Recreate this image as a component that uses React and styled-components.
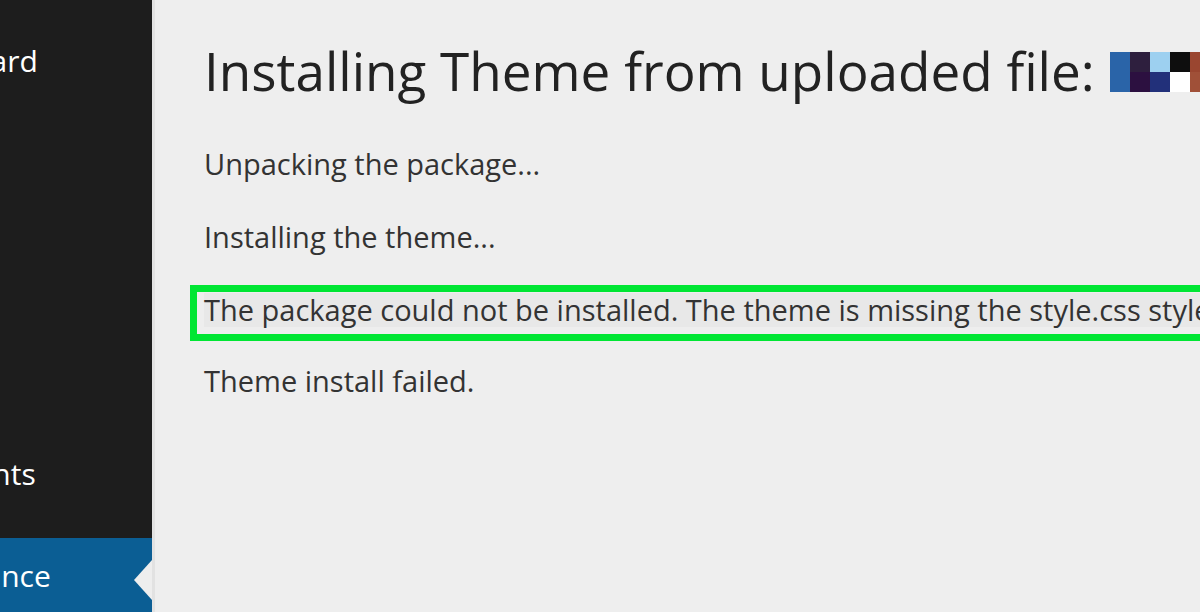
import React from 'react';
import styled, { createGlobalStyle } from 'styled-components';

const GlobalStyle = createGlobalStyle`
  html, body {
    margin: 0;
    padding: 0;
    background: #eeeeee;
    font-family: "Open Sans", "Noto Sans", sans-serif;
    overflow: hidden;
  }
`;

const Page = styled.div`
  display: flex;
  width: 1200px;
  height: 612px;
  overflow: hidden;
`;

const Sidebar = styled.nav`
  position: relative;
  flex: 0 0 152px;
  background: #1d1d1d;
  border-right: 3px solid #e2e2e2;
  overflow: hidden;
  display: flex;
  flex-direction: column;
`;

const MenuItem = styled.div`
  position: relative;
  height: ${p => p.$h}px;
  margin-top: ${p => p.$top || 0}px;
  display: flex;
  align-items: center;
  background: ${p => (p.$active ? '#0b5e94' : 'transparent')};
  color: #ffffff;
  font-size: 30px;
  white-space: nowrap;

  span {
    margin-left: -117px;
  }

  ${p =>
    p.$active &&
    `
    &::after {
      content: '';
      position: absolute;
      right: 0;
      top: 22px;
      border-top: 20px solid transparent;
      border-bottom: 20px solid transparent;
      border-right: 18px solid #eeeeee;
    }
  `}
`;

const Main = styled.main`
  flex: 1;
  padding: 0 0 0 49px;
  white-space: nowrap;
  color: #333333;
`;

const Heading = styled.h1`
  margin: 37px 0 0 0;
  font-size: 53px;
  font-weight: 400;
  line-height: 68px;
  color: #222222;
  display: flex;
  align-items: center;
  gap: 15px;
`;

const Pixels = styled.div`
  display: grid;
  grid-template-columns: repeat(5, 20px);
  grid-template-rows: 20px 20px;
  margin-top: 2px;
`;

const Pixel = styled.div`
  background: ${p => p.$c};
`;

const Line = styled.p`
  margin: ${p => p.$top || 0}px 0 0 0;
  font-size: 29px;
  line-height: 73px;
`;

const ErrorBox = styled.div`
  margin: 12px 0 0 -14px;
  height: 41px;
  border: 7px solid #00e633;
  display: flex;
  align-items: flex-start;
  padding: 1px 0 0 7px;
  width: 1200px;

  span {
    font-size: 29px;
    background: #e8e8e8;
    padding: 0 4px 0 0;
    line-height: 34px;
  }
`;

const pixelColors = [
  '#2a64a8', '#2e1f3e', '#9dd0f0', '#0e0e0e', '#9a4630',
  '#2a64a8', '#2c1040', '#22307a', '#ffffff', '#a05038',
];

export default function App() {
  return (
    <>
      <GlobalStyle />
      <Page>
        <Sidebar>
          <MenuItem $h={60} $top={30}><span>Dashboard</span></MenuItem>
          <MenuItem $h={60} $top={353}><span>Comments</span></MenuItem>
          <MenuItem $h={74} $top={35} $active><span>Appearance</span></MenuItem>
        </Sidebar>
        <Main>
          <Heading>
            Installing Theme from uploaded file:
            <Pixels>
              {pixelColors.map((c, i) => (
                <Pixel key={i} $c={c} />
              ))}
            </Pixels>
          </Heading>
          <Line $top={22}>Unpacking the package...</Line>
          <Line>Installing the theme...</Line>
          <ErrorBox>
            <span>The package could not be installed. The theme is missing the style.css stylesheet.</span>
          </ErrorBox>
          <Line $top={3}>Theme install failed.</Line>
        </Main>
      </Page>
    </>
  );
}
